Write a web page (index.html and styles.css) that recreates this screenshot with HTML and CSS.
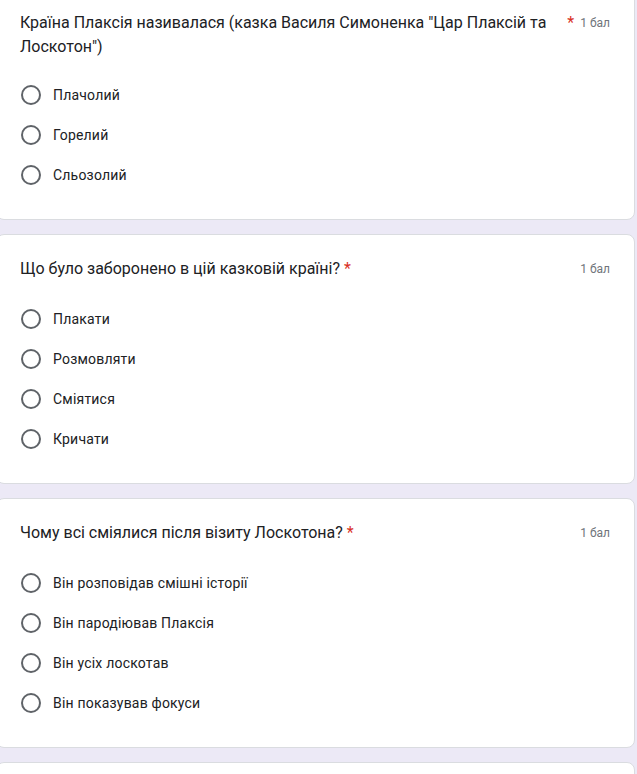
FILE: index.html
```html
<!DOCTYPE html>
<html lang="uk">
<head>
    <meta charset="UTF-8">
    <title>Тест</title>
    <link rel="stylesheet" href="styles.css">
</head>
<body>
    <div class="form">
        <!-- Question 1 -->
        <div class="card">
            <div class="question-header">
                <div class="question-title">Країна Плаксія називалася (казка Василя Симоненка "Цар Плаксій та Лоскотон")</div>
                <span class="required">*</span>
                <div class="points">1 бал</div>
            </div>
            <div class="options options-tight">
                <label class="option"><span class="radio"></span><span class="option-text">Плачолий</span></label>
                <label class="option"><span class="radio"></span><span class="option-text">Горелий</span></label>
                <label class="option"><span class="radio"></span><span class="option-text">Сльозолий</span></label>
            </div>
        </div>

        <!-- Question 2 -->
        <div class="card">
            <div class="question-header">
                <div class="question-title">Що було заборонено в цій казковій країні?</div>
                <span class="required">*</span>
                <div class="points">1 бал</div>
            </div>
            <div class="options">
                <label class="option"><span class="radio"></span><span class="option-text">Плакати</span></label>
                <label class="option"><span class="radio"></span><span class="option-text">Розмовляти</span></label>
                <label class="option"><span class="radio"></span><span class="option-text">Сміятися</span></label>
                <label class="option"><span class="radio"></span><span class="option-text">Кричати</span></label>
            </div>
        </div>

        <!-- Question 3 -->
        <div class="card">
            <div class="question-header">
                <div class="question-title">Чому всі сміялися після візиту Лоскотона?</div>
                <span class="required">*</span>
                <div class="points">1 бал</div>
            </div>
            <div class="options">
                <label class="option"><span class="radio"></span><span class="option-text">Він розповідав смішні історії</span></label>
                <label class="option"><span class="radio"></span><span class="option-text">Він пародіював Плаксія</span></label>
                <label class="option"><span class="radio"></span><span class="option-text">Він усіх лоскотав</span></label>
                <label class="option"><span class="radio"></span><span class="option-text">Він показував фокуси</span></label>
            </div>
        </div>

        <!-- Next question (cut off) -->
        <div class="card"></div>
    </div>
</body>
</html>
```

FILE: styles.css
```css
/* Reset */
* {
    box-sizing: border-box;
    margin: 0;
    padding: 0;
}

body {
    font-family: Roboto, 'Liberation Sans', sans-serif;
    background-color: #ece9f6;
    color: #202124;
    overflow: hidden;
}

/* Page is scrolled a little, first card starts above the window */
.form {
    display: flex;
    flex-direction: column;
    gap: 14px;
    margin-top: -12px;
    margin-left: -4px;
    width: 639px;
}

.card {
    background-color: #ffffff;
    border: 1px solid #dadce0;
    border-radius: 8px;
    padding: 22px 24px 24px 23px;
    min-height: 60px;
}

/* Question header */
.question-header {
    display: flex;
    align-items: flex-start;
}

.question-title {
    font-size: 16px;
    line-height: 24px;
    color: #202124;
}

.required {
    color: #d93025;
    font-size: 16px;
    line-height: 24px;
    padding-left: 4px;
}

.points {
    margin-left: auto;
    padding-left: 6px;
    font-size: 12px;
    line-height: 24px;
    color: #70757a;
    white-space: nowrap;
}

/* Radio options */
.options {
    margin-top: 18px;
    display: flex;
    flex-direction: column;
}

.options-tight {
    margin-top: 16px;
}

.option {
    display: flex;
    align-items: center;
    height: 40px;
}

.radio {
    width: 20px;
    height: 20px;
    border: 2px solid #5f6368;
    border-radius: 50%;
    margin-left: 1px;
    flex-shrink: 0;
}

.option-text {
    margin-left: 12px;
    font-size: 14px;
    letter-spacing: 0.2px;
    color: #202124;
}
```
